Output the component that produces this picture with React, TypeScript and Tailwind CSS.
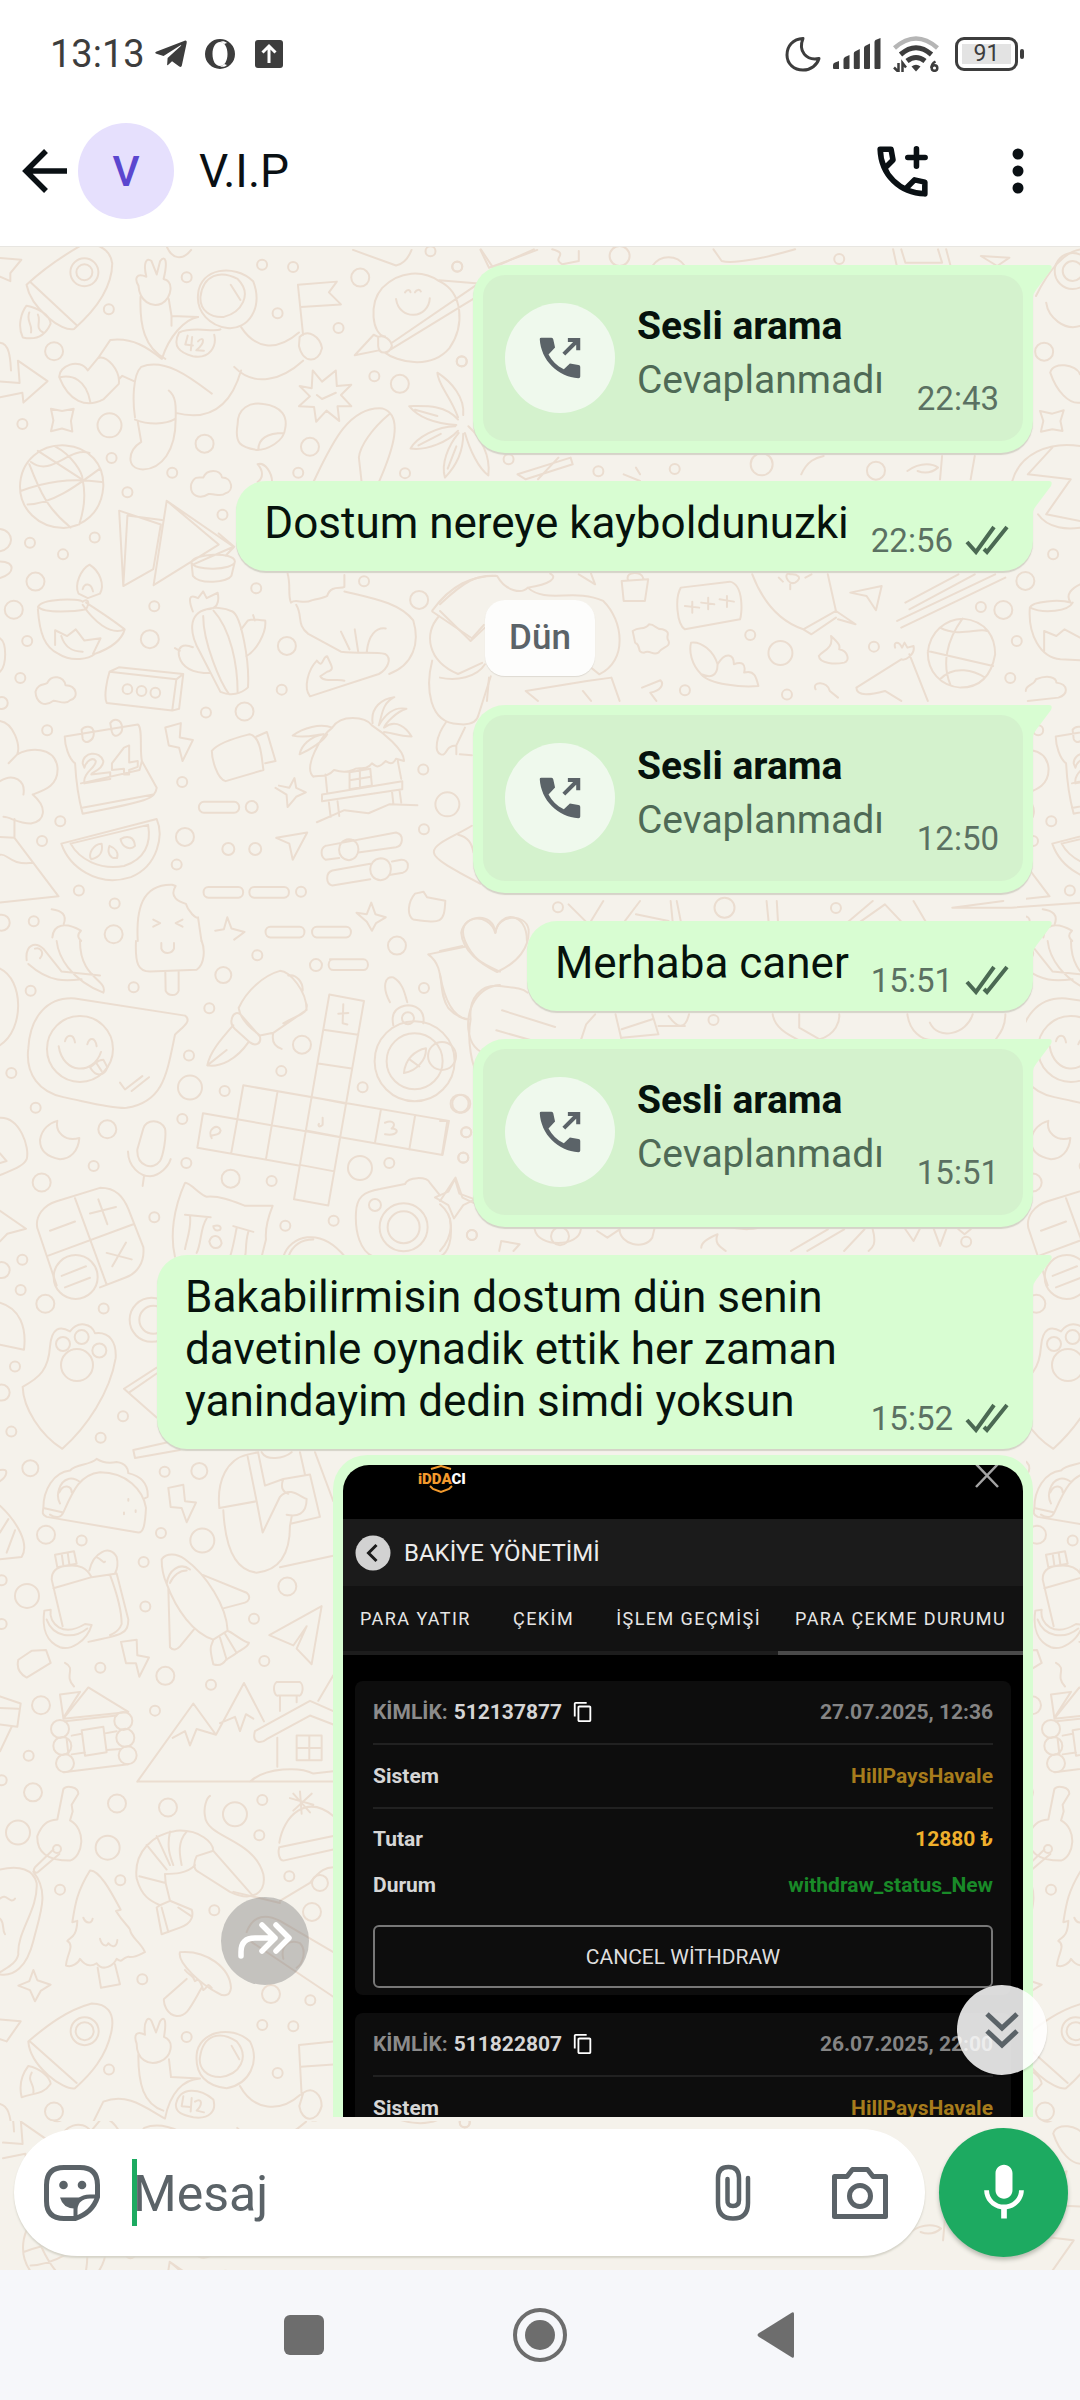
import React from "react";
import { FaTelegramPlane } from "react-icons/fa";
import { MdContentCopy, MdMic } from "react-icons/md";

type Zone = {
  matrix: [number, number, number, number];
  dots: number[][];
  paths: string[];
};

/* Doodles of the chat wallpaper, grouped by region. matrix = x, y, scaleX, scaleY; dots = cx, cy, radius. */
const zones: Zone[] = [
  {
    matrix: [0, 240, 0.3444, 0.4464],
    dots: [
      [316, 153, 5], [157, 247, 9], [65, 410, 5], [318, 413, 12], [324, 486, 5], [370, 563, 5], [275, 664, 5], [87, 676, 5],
      [183, 702, 5], [103, 763, 9], [40, 826, 9], [448, 818, 5], [435, 892, 9], [79, 896, 5], [59, 979, 5], [137, 1096, 5],
      [500, 519, 5], [594, 454, 9], [646, 613, 5], [744, 778, 5], [542, 81, 5], [761, 53, 5], [851, 58, 5], [806, 162, 5],
      [1046, 82, 9], [983, 195, 5], [1087, 303, 5], [1161, 320, 9], [900, 461, 9], [866, 519, 5], [1176, 520, 5], [1341, 270, 5],
      [1328, 57, 5], [1250, 23, 5], [1057, 762, 5], [1217, 804, 9], [833, 907, 9], [818, 1005, 5], [598, 1056, 5], [710, 1054, 9],
      [529, 1212, 5], [731, 1268, 6], [537, 1335, 9], [663, 1362, 6], [741, 1362, 6], [175, 1300, 5], [122, 1344, 5], [229, 1455, 5],
      [333, 1484, 5], [98, 1524, 5], [513, 1397, 5], [874, 1458, 5], [1229, 1184, 5], [1299, 1262, 12], [1231, 1318, 5], [330, 1553, 9],
      [5, 1527, 8], [5, 1035, 6], [245, 70, 14], [245, 70, 8],
    ],
    paths: [
      "M77 98C130 60 190 30 235 10C270 0 320 15 326 50C325 110 270 160 215 197C180 205 90 150 77 98ZM88 92L222 188M77 145C110 150 145 165 147 185C130 215 100 222 66 216C50 190 62 160 77 145M85 160C75 180 95 185 90 205M110 165C120 180 100 195 125 205",
      "M0 38L62 42L30 72V90L0 80M0 315L57 318L52 268L138 314L68 362L65 340L0 350M0 228C30 230 30 270 32 290",
      "M402 100C390 85 395 70 425 80C415 50 425 35 440 45L455 75L465 45C480 30 488 45 475 85C505 90 500 125 470 140C440 150 405 135 402 100ZM408 125C405 190 420 240 480 264M490 130L498 168L575 170M498 168V190M575 120C580 60 680 50 735 90C765 150 720 200 660 195C610 190 570 160 575 120ZM582 125C590 75 640 65 690 85C735 120 700 160 650 170C610 172 580 155 582 125ZM670 98L698 132",
      "M575 170C535 175 490 215 470 264C430 240 385 215 320 222L285 262M640 198C620 205 560 190 520 205C500 235 520 250 560 258C610 265 630 235 622 210M700 193C740 240 800 250 868 205M870 215C895 195 930 215 935 240C925 275 880 275 868 235ZM880 268C820 310 740 330 680 282M700 290C670 370 610 405 510 385M615 342C560 310 480 260 410 282C385 300 385 360 392 395M392 315L355 302L345 310M285 262L255 290C230 260 170 280 172 305C200 360 250 375 300 355L345 320C350 290 310 255 285 262ZM175 305C210 300 250 310 262 360M490 335C515 350 510 380 510 400M392 400C430 412 480 412 510 398M400 405L410 450C370 470 365 510 415 512C470 510 510 470 510 400",
      "M545 212L538 232L560 234M558 215L554 245M575 225C590 212 600 225 570 245L592 246",
      "M865 98L978 91L955 115L990 142L873 148M865 98L880 210M1118 214C1080 210 1070 140 1110 105C1160 65 1230 65 1275 90C1345 115 1350 190 1305 240C1250 290 1150 270 1118 250M1098 215L1085 210L1030 256L1100 245M1098 215C1115 210 1135 220 1138 235C1130 255 1100 255 1098 235ZM1138 228L1390 95L1275 88M1130 245L1405 115M1150 130C1160 180 1245 175 1248 128M1176 115C1182 108 1190 108 1192 115M1205 115C1210 108 1218 108 1222 113",
      "M870 325L905 330L908 290L935 315L975 290L978 325L1020 322L990 345L1020 370L980 370L985 403L948 380L918 405L912 372L868 370L900 348ZM920 345L935 354L975 340M148 376L180 381L214 376L206 403L210 427L180 420L148 426L155 402Z",
      "M690 410C690 375 725 360 765 365C820 370 835 395 828 420C825 450 775 468 745 468C700 462 680 455 690 410ZM750 468C750 440 780 430 825 430M910 540C960 460 1010 370 1110 375C1175 390 1140 470 1100 540M1130 388C1080 420 1045 460 1042 485L1050 540",
      "M1330 395C1310 350 1270 320 1270 295C1310 315 1350 350 1345 390M1330 400C1290 365 1230 370 1188 370C1220 400 1280 410 1325 412M1322 415C1270 415 1210 440 1192 465C1240 470 1300 450 1330 425M1332 430C1300 460 1280 500 1292 530C1330 500 1345 470 1345 432M1350 430C1365 470 1390 510 1418 525C1425 480 1395 440 1360 415M1205 378L1270 392M1215 458L1280 432M1300 510L1325 460",
      "M58 550C60 490 120 455 190 458C260 462 302 500 300 550C295 610 240 640 185 643C110 642 58 600 58 550ZM85 500C120 570 140 600 205 642M110 470L240 535C250 570 245 600 230 635M60 560C130 540 200 530 295 540M80 590C150 590 220 550 290 510M90 495C150 530 200 460 260 475M160 460C210 480 240 520 240 535",
      "M555 545C565 525 580 530 590 530C600 510 640 510 645 530C675 530 680 560 655 565C640 575 625 565 605 567C580 580 550 570 555 545ZM103 1010C110 990 130 995 137 990C150 970 185 975 190 995C225 995 228 1025 205 1028C190 1040 170 1030 155 1030C130 1045 105 1035 103 1010Z",
      "M346 604L467 635L445 735L358 773ZM358 773L370 615L470 625M484 582L635 680L446 771ZM484 582L678 685L560 725M635 655L680 685L655 705M556 720C560 700 680 695 682 718C680 738 560 740 556 720ZM556 720L560 750C580 770 660 765 672 750L682 718",
      "M110 820C120 800 230 800 240 808C255 800 262 808 250 825C220 830 130 835 110 820ZM250 810C290 830 330 850 362 870C320 885 270 850 240 815M110 825C115 880 130 910 170 925C210 945 260 935 275 925C330 910 355 890 362 870M228 790C215 770 235 735 260 725C290 740 305 770 290 790L255 800ZM240 780C245 765 265 765 270 785M160 905V872L195 885L220 870L245 895L292 890L270 925M178 885C190 915 215 920 240 920",
      "M748 500C770 495 790 520 790 540M748 540C765 530 765 515 748 500M318 965L345 955L532 970L520 1048L500 1052L310 1035C300 1020 312 980 318 965ZM318 965L512 982L500 1052M512 982L532 970",
      "M560 830C545 800 550 790 575 800L590 785L600 800L632 788C638 810 630 825 600 825M600 825C545 835 550 880 580 920L640 1010C670 1020 700 1015 720 1000C725 940 700 840 675 830C650 820 620 820 600 825ZM590 840C590 900 640 990 665 1015M620 828C670 870 690 950 690 1012M700 870L720 850C740 845 745 850 770 850C775 880 740 920 715 930M560 910C530 900 515 910 520 930C530 960 570 968 610 968M508 912L522 918M735 838L740 850",
      "M835 745C845 770 835 795 845 810C860 800 880 815 905 805C930 800 940 800 950 795C960 770 990 780 1000 775V748M860 815C880 840 860 860 895 880L990 920C1040 925 1090 920 1118 925C1140 935 1125 960 1100 970L900 1020C880 1000 895 960 920 940M920 940C940 960 935 930 950 930C960 950 975 960 950 965L930 975C940 990 980 980 1000 985M1000 785C1080 800 1160 810 1200 850C1220 900 1200 950 1130 970M990 875L1015 915M1030 870L1040 920M1065 920C1070 885 1090 865 1120 868",
      "M370 1004m-14 0a14 11 0 1 0 28 0a14 11 0 1 0 -28 0M411 1008m-14 0a14 11 0 1 0 28 0a14 11 0 1 0 -28 0M451 1012m-14 0a14 11 0 1 0 28 0a14 11 0 1 0 -28 0",
      "M188 1110L400 1083C415 1090 405 1140 412 1165L455 1225C450 1250 430 1255 240 1283C225 1240 220 1200 218 1170C200 1160 188 1130 188 1110ZM235 1270L445 1240M237 1095C245 1085 270 1085 272 1100C275 1120 245 1130 240 1115ZM320 1080C330 1068 352 1070 355 1090C355 1108 330 1115 325 1100ZM412 1165L405 1185L235 1215M240 1170C240 1145 290 1140 300 1165C300 1185 265 1190 265 1195L320 1190V1205L245 1215C240 1190 280 1180 278 1165C270 1155 250 1165 245 1180ZM360 1135L375 1130V1168L400 1165V1178L375 1185V1195H360V1182L325 1185V1170Z",
      "M480 1090L525 1080L522 1112L560 1118L530 1165L520 1135L490 1130ZM615 1142C640 1120 700 1110 725 1105C760 1110 760 1165 765 1185L655 1210C630 1205 615 1160 615 1142ZM745 1110L775 1100L800 1165L770 1170",
      "M810 1220L840 1225L855 1203L860 1225L888 1235L860 1245L835 1268L832 1240L800 1225M592 1256H680A14 12 0 0 1 680 1281H592A14 12 0 0 1 592 1256M605 1447H692A14 12 0 0 1 692 1471H605A14 12 0 0 1 605 1447M738 1447H825A14 12 0 0 1 825 1471H738A14 12 0 0 1 738 1447M785 1536H870A14 12 0 0 1 870 1560H785A14 12 0 0 1 785 1536M920 1536H1005A14 12 0 0 1 1005 1560H920A14 12 0 0 1 920 1536M802 1337L892 1325L850 1386L840 1350Z",
      "M910 1200C880 1180 930 1110 965 1090C990 1060 1060 1065 1080 1085C1110 1100 1175 1140 1173 1165L1150 1160C1140 1175 1130 1170 1120 1165C1100 1180 1095 1180 1080 1170C1060 1190 1040 1175 1025 1185C1010 1190 990 1190 970 1185C950 1205 920 1195 910 1200ZM965 1090C930 1080 880 1090 850 1108C890 1115 920 1105 940 1105C900 1110 875 1130 870 1150C900 1140 940 1120 950 1105M1082 1080C1075 1045 1110 1025 1145 1022C1110 1035 1110 1060 1100 1085C1130 1045 1160 1045 1180 1048C1150 1055 1120 1080 1115 1090C1150 1070 1180 1090 1195 1110C1160 1110 1130 1100 1115 1100M935 1240L1168 1210V1228L935 1255ZM945 1195L950 1235M1155 1165L1165 1205M1015 1190V1228L1080 1220L1075 1182ZM1045 1185V1225M1015 1208L1078 1200M955 1258L960 1290M980 1255L985 1288M1138 1232L1142 1260M1160 1230L1165 1258M920 1302L1000 1275L1070 1282L1130 1262L1212 1264",
      "M178 1350L455 1295C475 1330 460 1400 380 1425C280 1450 200 1400 178 1350ZM205 1350L430 1308C440 1350 420 1385 360 1400C290 1410 230 1385 205 1350M295 1350C270 1350 255 1375 265 1385C290 1380 300 1370 295 1350ZM318 1355C310 1370 320 1385 340 1382C345 1370 335 1360 318 1355ZM350 1340C355 1360 380 1365 392 1355C390 1335 370 1330 350 1340Z",
      "M0 1075C40 1080 60 1130 50 1150C80 1135 160 1130 167 1180C170 1220 130 1230 95 1240C140 1270 130 1300 90 1305C50 1305 30 1290 10 1290M25 1170L50 1150M0 1210C40 1190 75 1210 68 1240M42 1295V1337L0 1335M42 1337L170 1468L0 1482M0 1375C20 1370 30 1400 95 1393M0 645C45 650 40 690 0 695M0 718C45 718 45 745 0 755M0 890C20 900 20 950 0 965",
      "M400 1568C395 1500 410 1440 500 1442L510 1445C490 1470 520 1480 540 1485C545 1500 570 1520 575 1515L585 1568M445 1520L465 1528L445 1536M530 1520L510 1528L530 1536M150 1497C180 1500 195 1510 185 1530M152 1560C155 1530 190 1525 235 1545C215 1560 240 1568 235 1568",
      "M945 1355L1150 1325C1175 1330 1170 1355 1150 1358L1040 1370M985 1382L945 1386C930 1380 930 1360 945 1355M1013 1340C1050 1340 1050 1385 1013 1387C975 1385 975 1342 1013 1340ZM965 1410L1075 1395M1138 1390L1165 1386C1190 1385 1190 1410 1170 1415L1130 1420M1075 1430L965 1444C945 1440 945 1415 965 1410M1105 1383C1145 1383 1145 1430 1105 1432C1065 1430 1065 1385 1105 1383Z",
      "M1255 828C1310 770 1370 750 1440 750M1255 830L1370 890L1405 860M1275 840C1230 880 1240 940 1330 970L1400 945M1255 940C1235 1000 1245 1080 1330 1082C1360 1085 1385 1080 1390 1060L1425 975M1295 1078C1265 1110 1260 1145 1280 1150C1300 1155 1290 1130 1325 1130L1350 1090M1335 1150L1370 1152M1325 1130V1150",
      "M1370 1310C1330 1330 1255 1350 1260 1370C1260 1385 1320 1410 1395 1440M1330 1330C1360 1335 1370 1350 1375 1370M1205 1462L1230 1458L1240 1470L1293 1478C1290 1530 1280 1528 1200 1520C1180 1510 1185 1480 1205 1462ZM1035 1505L1065 1508L1078 1482L1090 1508L1120 1515L1092 1528L1080 1545L1065 1525ZM625 1545L650 1542L660 1515L672 1540L710 1548L680 1565M1350 1568C1320 1510 1420 1500 1438 1550C1450 1500 1530 1500 1530 1568",
      "M485 14C500 40 530 45 555 20M1025 20L1150 55C1180 50 1190 30 1195 20M1395 20L1420 60L1560 20",
    ],
  },
  {
    matrix: [440, 240, 0.4082, 0.3333],
    dots: [
      [42, 77, 5], [978, 54, 5], [53, 361, 5], [388, 691, 5], [575, 684, 5], [1068, 689, 9], [1480, 332, 9], [1550, 90, 18], [1550, 90, 10],
      [1502, 940, 5], [1434, 1020, 9], [1380, 1107, 9], [1325, 1098, 5], [1413, 1200, 5], [760, 1182, 5], [834, 1236, 12], [1063, 1217, 5],
      [1397, 1311, 5], [600, 1348, 5], [850, 1361, 5], [440, 45, 10], [788, 670, 11], [168, 655, 5],
    ],
    paths: [
      "M100 25L130 80L230 25M275 25C320 40 270 50 300 70L340 60V30M520 75C540 40 580 40 600 75M670 25L690 60C720 70 800 50 870 25M1110 25L1120 80M1130 25L1140 65H1230L1220 25M1240 25L1252 80M1325 45L1395 50L1365 75ZM1570 25C1530 30 1490 90 1460 165M1485 185C1490 230 1530 270 1568 255M1495 395C1500 360 1560 370 1568 400M1495 395C1510 450 1540 490 1568 485M1470 510L1500 518L1528 508L1520 540L1525 570L1500 565L1472 572L1478 540ZM190 700L320 650L325 670L210 715ZM290 650L240 715M450 700L490 720M480 680L490 700M885 700C900 660 920 650 940 645M1145 690C1180 660 1210 670 1220 680C1200 700 1180 695 1170 690M1230 645L1225 715M1310 645L1300 715M1402 720C1420 640 1490 600 1568 615M1440 700L1500 620M1440 700L1545 715M1485 820L1545 715M1465 820C1490 865 1540 865 1568 860M1485 820L1568 840",
      "M370 998L380 1030L340 1000M445 1020L510 1015L502 1080L450 1080ZM460 1015C455 990 495 990 498 1012M590 1040L710 1022C745 1030 740 1120 735 1135L600 1165C580 1150 575 1070 590 1040ZM600 1095L635 1100M618 1082V1115M640 1085L672 1090M657 1070V1105M685 1075L720 1082M703 1065V1098M765 1000C790 1080 830 1140 890 1165L970 1110L950 1000M890 1165L910 1180L970 1130M970 1110L1018 1150L975 1135M830 1010L840 1022M858 1030V1045M895 1010L910 1000M858 1000C840 990 850 1035 870 1025C890 1010 875 998 858 1000M1005 1055L1082 1035L1068 1108L1045 1065ZM1140 1085L1270 1000M1150 1105L1310 1000M1120 1140L1360 1000M1130 1160L1385 1010",
      "M472 1170C490 1155 500 1170 512 1150C530 1150 525 1165 545 1165C570 1175 550 1185 560 1200C565 1220 545 1215 535 1235C520 1245 515 1225 500 1235C480 1235 495 1215 478 1205ZM615 1205C640 1200 670 1230 680 1270C680 1310 660 1310 640 1300C615 1270 610 1230 615 1205ZM680 1270C700 1230 720 1240 720 1270C740 1260 750 1270 745 1295C770 1285 775 1310 780 1335M640 1300C660 1330 740 1340 780 1335M958 1185C980 1210 980 1215 978 1225C1000 1230 1005 1260 990 1265C970 1270 930 1270 928 1245C935 1230 965 1225 958 1185Z",
      "M1195 1235C1200 1170 1240 1135 1280 1133C1340 1140 1360 1190 1360 1240C1350 1310 1320 1340 1275 1340C1225 1335 1195 1290 1195 1235ZM1280 1133C1240 1200 1230 1270 1250 1330M1195 1230L1355 1275M1225 1160C1270 1190 1320 1160 1340 1170M1225 1315C1260 1270 1310 1290 1335 1310M1445 1100C1450 1080 1520 1075 1545 1085C1530 1060 1550 1040 1568 1030M1445 1100C1440 1180 1470 1250 1520 1255L1568 1258M1445 1100C1480 1120 1540 1110 1550 1085M1480 1230V1170L1510 1185L1530 1165L1568 1190M1115 1220C1110 1200 1125 1200 1132 1220L1138 1205L1145 1220L1160 1215C1165 1240 1140 1260 1130 1255M1130 1255L1020 1340C1020 1370 1060 1360 1090 1350L1130 1380M1150 1240L1195 1380M1435 1350C1435 1330 1455 1335 1460 1315C1490 1300 1510 1310 1510 1325C1540 1330 1540 1360 1515 1370L1440 1380",
      "M0 1090C60 1020 90 1000 140 1005M140 1005C160 1050 200 1060 215 1040C270 1030 290 1010 270 998M215 1040C260 1090 330 1040 400 1080C450 1140 460 1260 390 1300L370 1280M0 1110L75 1200L110 1160M0 1310C40 1320 90 1310 110 1270M120 1310L115 1380M210 1350L360 1320L420 1310L440 1380M210 1350L240 1380M350 1350L370 1380M495 1340L540 1318C550 1330 540 1350 515 1355L530 1380M920 1345C910 1320 950 1320 955 1350L975 1370",
    ],
  },
  {
    matrix: [0, 940, 0.3333, 0.3827],
    dots: [
      [92, 130, 5], [401, 121, 5], [670, 89, 8], [628, 176, 5], [772, 37, 5], [948, 63, 6], [1191, 12, 9], [1272, 123, 5],
      [567, 299, 5], [906, 271, 9], [34, 345, 5], [107, 436, 5], [570, 383, 12], [674, 392, 5], [844, 340, 5], [1088, 382, 5],
      [1384, 425, 9], [322, 492, 9], [281, 588, 5], [125, 631, 9], [547, 465, 5], [559, 580, 5], [692, 621, 9], [815, 627, 5],
      [1080, 593, 12], [1168, 580, 5], [1399, 500, 5], [1390, 566, 5], [463, 722, 5], [856, 744, 5], [1001, 731, 5], [1416, 768, 5],
      [67, 833, 5], [62, 912, 5], [136, 948, 9], [311, 960, 5], [45, 1112, 5], [34, 1282, 5], [369, 1242, 5], [302, 1298, 5],
      [5, 860, 8], [5, 1180, 8], [1125, 690, 6], [240, 282, 33], [189, 1053, 7], [245, 1035, 7], [298, 1070, 7], [231, 1108, 16],
      [1211, 748, 24], [1211, 748, 16], [1244, 314, 40], [1244, 314, 28], [227, 878, 22], [1224, 202, 6], [455, 990, 22], [460, 990, 14],
    ],
    paths: [
      "M408 0C405 60 415 80 450 80L590 75C615 60 615 20 605 0M484 5V20C490 35 515 35 522 20V5M496 82L497 130C505 145 530 145 536 130V80M80 50C75 10 105 0 130 20L185 80L300 90M85 60C150 110 200 105 245 100M170 0C175 40 210 100 310 135C325 100 240 100 240 0M0 72C70 100 75 230 0 272M105 20C120 15 135 30 120 45",
      "M85 280C90 200 140 145 225 150L555 195C580 210 540 230 525 245C500 350 490 420 380 436C330 438 260 420 190 408C120 395 75 350 85 280ZM176 275C190 350 280 350 303 290M195 262C200 245 220 240 225 265M262 270C268 252 285 250 290 275M270 330C290 320 290 310 310 310L322 330C315 350 290 360 270 330ZM290 320L305 340M360 370L375 388L427 353M395 392L447 356",
      "M716 175C740 130 790 90 840 78C870 80 920 130 920 180L820 240L780 247L770 240C740 220 720 200 716 175ZM865 90C890 85 910 110 908 130M920 165C925 190 900 190 850 215M820 240C815 260 820 275 845 282M695 205C700 185 715 185 725 195L780 250C785 270 765 275 750 265L705 230C695 222 692 215 695 205ZM700 220C660 260 630 290 622 325C660 330 710 310 745 265M622 325L680 285",
      "M988 140L1092 157L985 691L882 675ZM970 232L1075 245M955 320L1055 333M937 408L1040 425M918 495L1020 512M900 585L1003 602M730 377L1347 470L1328 559L712 466ZM609 450L712 466M609 450L592 540L900 587M712 466L694 553M832 397L798 570M1143 440L1125 527M1245 458L1228 545M1015 190L1045 188M1030 165L1028 215L1042 218M968 462V480C955 490 955 480 957 478M635 515C620 490 655 475 662 495C660 510 640 505 632 510M1155 475C1180 465 1190 480 1175 490C1200 490 1195 510 1155 505",
      "M1170 160C1145 120 1155 90 1180 95C1210 110 1215 140 1222 160M1180 220C1170 180 1200 170 1225 168C1260 170 1275 190 1270 215M1212 345C1215 310 1245 285 1278 280C1280 310 1250 340 1212 345ZM1230 310L1258 328",
      "M120 520C125 490 150 475 172 470C165 500 195 525 238 515C235 550 210 570 180 570C145 565 120 550 120 520ZM412 545L430 490C440 465 480 465 495 490C500 510 490 560 480 575C460 600 410 590 412 545ZM384 550C385 590 420 615 450 615C480 612 505 590 512 570M432 615L428 640M0 462C60 460 90 540 80 570C70 590 30 600 0 612M0 555L20 575L0 580M0 705L78 752L22 765L0 785",
      "M112 750C105 720 130 690 170 680L300 645C350 645 370 670 385 700L430 800C435 840 410 870 375 880L300 905M112 750L170 900M225 672L320 898M145 822L400 740M150 757L225 733M270 712L348 695M295 675L322 740M320 815L395 832M378 788L337 850M185 875L258 850M195 905L270 880",
      "M525 825C510 770 520 700 555 632C570 630 600 665 620 668C660 665 700 680 735 692L818 692C805 720 795 750 798 780L785 825M555 715L632 722M700 745L760 760M570 718C575 750 560 780 555 805M620 725C600 750 605 790 590 815M710 750C705 770 700 800 690 825M745 760C735 790 740 810 735 825M640 745C660 740 665 748 660 755C645 760 640 750 640 745ZM628 785C635 765 660 765 665 790C660 805 635 810 628 785M850 825C870 770 960 745 1035 825M865 825C880 790 910 780 940 780",
      "M1068 710C1070 670 1090 655 1140 648L1215 635C1225 615 1280 615 1290 632M1068 710C1065 760 1080 810 1120 825M1290 632L1320 665M1350 725C1360 780 1345 815 1320 825M1305 670L1345 655L1365 622L1378 660L1425 675L1390 690L1362 725L1345 690ZM1285 35L1395 15M1285 35C1340 70 1310 130 1345 175C1370 200 1400 205 1405 205M1395 0C1420 50 1450 60 1500 80M1500 115C1430 120 1400 180 1405 230C1410 270 1430 290 1470 300M0 945C60 960 80 1010 72 1068L0 1055",
      "M68 1165C120 1140 145 1120 150 1060C155 1010 180 1005 210 1020C235 990 275 1000 285 1025C330 1020 350 1050 347 1090C330 1180 260 1270 187 1327C120 1290 70 1220 68 1165ZM372 1170L470 1115M372 1170L470 1245M390 1178L470 1130M990 48H1090A14 14 0 0 1 1090 76H1000A14 14 0 0 1 1000 48",
    ],
  },
  {
    matrix: [0, 1440, 0.3333, 0.4464],
    dots: [
      [91, 61, 8], [494, 69, 5], [598, 67, 8], [138, 210, 9], [245, 223, 5], [483, 206, 5], [607, 223, 12], [431, 271, 5],
      [81, 347, 12], [436, 371, 5], [862, 326, 9], [762, 398, 5], [793, 493, 5], [301, 508, 5], [496, 526, 9], [633, 546, 5],
      [465, 604, 5], [123, 592, 9], [86, 705, 5], [99, 787, 9], [54, 877, 12], [351, 812, 9], [504, 821, 9], [323, 911, 12],
      [705, 836, 12], [787, 804, 5], [778, 883, 5], [868, 975, 5], [936, 1055, 9], [180, 1005, 5], [361, 984, 5], [643, 1051, 5],
      [427, 1206, 5], [813, 1239, 9], [931, 1253, 5], [787, 1308, 5], [880, 1311, 5], [560, 1335, 5], [327, 1408, 5], [833, 1416, 5],
      [162, 1502, 9], [960, 990, 8], [254, 1322, 14], [254, 1322, 9], [5, 312, 5], [5, 410, 5], [5, 760, 5], [171, 914, 4],
      [180, 645, 9], [187, 683, 9], [195, 722, 9], [370, 627, 9], [376, 665, 9], [383, 704, 9],
    ],
    paths: [
      "M130 150C130 110 160 70 210 66C230 50 270 55 290 40C310 50 330 50 350 47C380 50 385 65 385 72C430 80 445 100 443 125L430 130M190 160C220 110 240 75 300 70C380 70 430 110 438 150C435 190 430 205 415 205L140 170C125 165 128 160 130 150ZM180 140C165 120 180 90 205 85C220 80 240 92 240 92M190 160C185 170 170 175 150 165M178 115C190 95 215 100 215 115M385 130v4M372 160v4M407 155v4",
      "M505 105L550 98L555 135L588 138L560 182L545 150L512 148ZM363 450L410 445L412 480L447 485L418 528L408 498L378 498ZM400 20L520 0M400 20L405 38L540 20M0 65C30 60 20 80 0 90M0 145C50 180 90 230 65 260L0 265M0 205L25 175M20 250L45 200",
      "M658 150C650 90 680 40 745 30L775 25M658 150L770 135L743 35M670 155C675 230 700 290 770 295C840 290 870 250 870 190L875 170M770 135L788 205L840 125C870 100 900 125 920 130C920 165 890 170 860 165M775 28L795 100L850 85M850 85L930 75L960 170L875 185M850 85C840 105 850 115 865 118M840 283L1000 257M785 25C800 45 850 40 875 25M900 25L915 75M945 25L1000 135",
      "M165 255L222 247L230 275L172 283ZM185 252L190 278M203 250L208 276M155 310C155 290 175 282 195 280C240 275 260 285 275 305L350 297L385 400C385 430 370 435 265 450M155 310L188 415M160 330L275 305M330 300C350 340 365 380 365 410C355 430 340 430 330 435M268 290C280 250 330 230 350 260C355 275 350 290 345 297M290 260C305 265 310 275 315 270M133 380L152 378C145 410 190 440 255 410L275 412C260 450 210 470 180 462C140 450 125 420 133 380ZM140 400C160 440 220 445 262 420",
      "M485 265C500 250 530 252 555 265C620 300 680 370 683 425L640 445C580 430 530 380 500 320C488 300 485 285 485 265ZM500 320C505 290 540 270 570 288M510 318C520 300 540 290 560 290M608 300L740 340C755 350 745 360 735 362L670 375M505 330L510 462C520 470 530 468 540 460L582 422M640 445C635 460 625 455 640 500C660 505 670 500 678 490C700 480 710 475 715 472C730 465 745 460 747 452C730 450 700 430 683 425M660 440L680 490M675 432L710 475",
      "M808 435L965 370L935 500L890 465L920 415L880 458ZM55 490L85 475L95 470L138 468L152 497L80 530C55 520 50 505 55 490ZM195 497C230 510 190 525 222 550M0 572L62 588L52 640L0 635M0 598L55 600M35 640L0 695",
      "M180 568L240 562L190 620ZM190 622L265 552L385 607ZM195 628L350 615M245 648L310 640L320 697L255 705ZM215 660L245 656M215 702L255 698M315 655L350 650M320 692L362 690M190 742L385 724M200 668L205 700",
      "M412 763L580 588L648 658L732 542L792 628M518 665L555 650L570 682L590 645L648 658M660 632L705 618L720 650L738 612L760 622M412 763H1000M765 650L930 582L1000 605M765 650C755 675 780 680 800 668L930 615L1000 635M840 605V570M890 585V570M830 540H900A8 12 0 0 1 895 570H835A8 12 0 0 1 830 540M832 665V730M890 660H965V715H890ZM928 660V715M890 688H965M750 763C800 730 900 730 940 745L1000 740M955 582L1000 525",
      "M190 780C200 770 235 775 235 790L215 815L218 830L210 850C260 870 250 930 210 940C140 940 110 920 112 885C125 860 140 850 172 848ZM160 915L105 955C95 965 110 970 115 965L178 925M0 960C60 950 100 960 110 990C115 1050 50 1100 55 1150C50 1170 20 1180 0 1190M100 965C150 1010 120 1060 100 1120C80 1180 40 1200 0 1195M0 1025C20 1010 30 1040 45 1025M0 1070C15 1080 5 1095 15 1105",
      "M270 962C230 1010 225 1040 217 1078L232 1075C230 1110 215 1110 202 1120C225 1130 200 1150 198 1175C215 1180 235 1170 240 1160C260 1180 280 1175 290 1170C310 1190 340 1175 350 1160C370 1170 360 1160 385 1155C400 1160 420 1150 435 1145C420 1120 395 1115 390 1095C390 1090 370 1080 348 1053L362 1050C340 1020 300 960 270 962ZM293 1180L303 1225L360 1217L345 1172M250 1068C258 1082 275 1082 278 1070M300 1115C305 1130 320 1135 325 1125C335 1135 350 1135 352 1118M55 1220L88 1210L100 1185L112 1208L152 1218L122 1232L105 1255L90 1230Z",
      "M410 980C400 920 460 880 530 873C600 870 640 900 640 918L760 1020M640 918L590 930C580 945 580 960 595 965L690 1010C760 1035 800 1010 790 970C760 890 620 890 615 840C610 820 620 800 630 795M410 980C425 1020 450 1030 480 1040L510 1030L497 990L495 970C520 970 560 970 585 950M440 905L500 960M470 885L510 950M510 875C500 910 510 930 520 950M560 875C530 900 540 930 545 950M418 975L497 990M480 1040L470 1045L485 1105L540 1090C580 1080 580 1060 575 1050L510 1030M485 1045L505 1100M535 1045L575 1065",
      "M540 1145C620 1140 690 1180 693 1225C690 1245 670 1245 650 1235C610 1220 530 1170 540 1145ZM555 1185C570 1200 580 1195 585 1210C600 1200 605 1220 610 1230C625 1225 620 1210 635 1225M605 1225C570 1270 560 1290 530 1288C500 1285 490 1260 492 1250L560 1205M838 900C850 840 920 790 1000 840M838 910L1000 885M838 910C832 925 840 940 850 940L1000 915M870 800L940 815M900 785L905 835M880 828L935 790M880 790L930 832M840 1030L930 990C960 960 980 955 1000 955M700 1010L840 1035M740 1100C760 1060 800 1060 840 1075L1000 1145M740 1115L1000 1245M850 1160C840 1130 870 1115 900 1125C920 1140 910 1170 890 1180",
      "M85 1345C140 1310 200 1275 275 1260C320 1260 345 1280 335 1320C320 1380 270 1420 225 1450C190 1455 90 1400 85 1345ZM90 1345L230 1438M85 1400C120 1405 150 1425 152 1440C130 1465 100 1460 65 1470C55 1440 70 1415 85 1400M95 1415C80 1435 105 1440 100 1460",
      "M410 1350C400 1330 410 1320 435 1330C430 1300 445 1285 455 1300L468 1325L480 1300C495 1285 500 1300 492 1335C525 1345 515 1380 480 1390C445 1400 410 1385 410 1350ZM415 1375C415 1440 430 1485 490 1500M507 1385L513 1425L600 1428M590 1375C595 1325 690 1305 750 1345C780 1390 750 1440 680 1450C620 1445 585 1420 590 1375ZM600 1380C610 1330 660 1320 710 1345C750 1380 720 1420 660 1425C620 1425 595 1405 600 1380ZM695 1355L718 1385M600 1428C550 1430 510 1460 495 1518C430 1490 380 1460 310 1480L270 1540M528 1485C540 1445 600 1450 640 1475C650 1500 630 1520 580 1515C550 1510 525 1505 528 1485ZM720 1445C760 1500 840 1505 900 1465M897 1353L1000 1345M897 1353L905 1465M910 1460C940 1445 965 1465 965 1490C950 1530 905 1525 898 1490ZM903 1402L1000 1397M0 1296L62 1300L20 1345M0 1340L20 1345M0 1485C25 1490 30 1510 35 1540M55 1540L58 1525L120 1540M550 1468L545 1490L570 1492M575 1472L572 1502M585 1480C605 1470 610 1485 590 1500L612 1504",
    ],
  },
  {
    matrix: [440, 900, 0.4082, 0.3333],
    dots: [
      [289, 19, 5], [970, 21, 5], [48, 608, 9], [64, 694, 5], [57, 770, 5], [78, 1002, 5], [670, 357, 5], [294, 1006, 9], [1289, 1022, 5],
      [697, 20, 10], [5, 465, 14],
    ],
    paths: [
      "M136 95C130 30 60 40 52 95C55 150 100 190 140 213C190 185 220 140 217 85C210 35 140 40 136 95ZM0 150L55 135M0 220C10 290 30 350 70 355M75 355C70 290 100 250 145 255C180 260 200 260 215 275M75 355C65 420 80 500 90 510M152 328L282 378M138 388L230 420M345 418L358 370L380 340M430 340L445 418M445 385L520 355M520 340L535 400L445 410M560 345C580 380 600 390 610 340M535 375H600M815 340C820 380 850 400 880 418M880 340V380L930 415C970 400 980 360 978 340M1145 340C1150 390 1180 420 1210 418M1200 365C1220 420 1290 400 1305 340M1385 340C1385 380 1370 400 1360 418M315 10L360 65M400 0L370 60M450 65L490 0M480 40L560 60M565 0L570 62M580 0L590 62M800 0L805 62M825 0L828 62M1000 62L1060 0M1030 62L1090 10L1130 62M1160 0L1190 62M1255 20L1380 0M1255 20H1400L1568 5",
      "M0 660H18L5 760M0 900L38 830L55 890L90 910M0 910C40 950 30 1010 0 1050M232 985C240 1040 340 1040 345 985M385 990L410 1010L440 985M440 985C440 1030 500 1050 520 1010L525 985M150 1020L195 1030L180 1050M145 1050L150 1020M640 1040C640 1020 670 1005 680 1000C670 1030 690 1040 700 1050M700 975C740 990 780 985 790 975M860 1050L950 985M900 1050L990 985M990 1050L1040 985M1060 985C1070 1030 1060 1040 1050 1050M1140 985L1160 1020L1175 985M1210 985L1225 1035L1240 985M1270 985L1285 1000L1300 985",
    ],
  },
];

function DoodleZone({ zone }: { zone: Zone }) {
  const [ox, oy, sx, sy] = zone.matrix;
  return (
    <g>
      <g transform={`translate(${ox} ${oy}) scale(${sx} ${sy})`}>
        {zone.paths.map((d, j) => (
          <path key={j} d={d} />
        ))}
      </g>
      {zone.dots.map(([x, y, r], j) => (
        <circle key={j} cx={ox + x * sx} cy={oy + y * sy} r={r} />
      ))}
    </g>
  );
}

/* The doodle tile is 991 units wide and 1761 units tall; it repeats to the right and below. */
function Wallpaper() {
  return (
    <svg
      aria-hidden="true"
      viewBox="0 246 1080 2024"
      preserveAspectRatio="xMidYMin slice"
      className="absolute inset-0 size-full [&_path]:[vector-effect:non-scaling-stroke]"
      fill="none"
      stroke="#ebddd0"
      strokeWidth="2"
      strokeLinecap="round"
      strokeLinejoin="round"
    >
      <defs>
        <clipPath id="tile-main">
          <rect x="0" y="246" width="1080" height="1874" />
        </clipPath>
        <clipPath id="tile-right">
          <rect x="1026" y="720" width="54" height="1400" />
        </clipPath>
        <clipPath id="tile-below">
          <rect x="0" y="2120" width="1080" height="150" />
        </clipPath>
      </defs>
      <g clipPath="url(#tile-main)">
        {zones.map((z, i) => (
          <DoodleZone key={i} zone={z} />
        ))}
      </g>
      <g clipPath="url(#tile-right)">
        <g transform="translate(991 0)">
          <DoodleZone zone={zones[0]} />
          <DoodleZone zone={zones[2]} />
          <DoodleZone zone={zones[3]} />
        </g>
      </g>
      <g clipPath="url(#tile-below)">
        <g transform="translate(3 1761)">
          <DoodleZone zone={zones[0]} />
          <DoodleZone zone={zones[1]} />
        </g>
      </g>
    </svg>
  );
}

function StatusBar() {
  return (
    <div className="flex h-[108px] items-center justify-between pr-14 pl-[50px] text-[#3d3d3d]">
      <div className="flex items-center">
        <span className="text-[38px] leading-10">13:13</span>
        <FaTelegramPlane className="ml-2 size-9" />
        <svg viewBox="0 0 30 30" className="ml-4 size-[30px]" fill="currentColor">
          <path fillRule="evenodd" d="M15 0A15 15 0 1 1 15 30A15 15 0 1 1 15 0ZM15 3C10.500 3 7.500 8 7.500 15S10.500 27 15 27S22.500 22 22.500 15S19.500 3 15 3Z" />
          <path d="M15 3C17 1.500 20 2 22 4L19 5C18 4 16.500 3 15 3ZM15 27C17 28.500 20 28 22 26L19 25C18 26 16.500 27 15 27Z" fill="#fff" />
        </svg>
        <svg viewBox="0 0 28 28" className="ml-5 size-7">
          <rect width="28" height="28" rx="3" fill="currentColor" />
          <path d="M14 23V7M7.500 12.500L14 6L20.500 12.500" stroke="#fff" strokeWidth="3" fill="none" />
        </svg>
      </div>
      <div className="flex items-center">
        <svg viewBox="0 0 36 36" className="size-9" fill="none" stroke="currentColor" strokeWidth="3" strokeLinejoin="round">
          <path d="M18 2.500C8 3 2 10 2 19C2 28 9 34 18 34C26 34 32 29 34 22.500C21 25 13 15 18 2.500Z" />
        </svg>
        <svg viewBox="0 0 48 32" className="ml-3 h-8 w-12" fill="currentColor">
          <path d="M0 27Q0 25 2 24.500L6 23V31H1Q0 31 0 30ZM10.500 21.500Q10.500 20 12 19L16.500 17V30Q16.500 31 15.500 31H11.500Q10.500 31 10.500 30ZM20.800 15.500Q20.800 14 22 13.500L26.800 11V30Q26.800 31 25.800 31H21.800Q20.800 31 20.800 30ZM31 10Q31 9 32 8L37 5.500V30Q37 31 36 31H32Q31 31 31 30ZM41.500 4Q41.500 3 42.500 2L47.500 0V30Q47.500 31 46.500 31H42.500Q41.500 31 41.500 30Z" />
        </svg>
        <svg viewBox="0 0 46 36" className="ml-3 h-9 w-[46px]" fill="none" stroke="currentColor" strokeWidth="5">
          <path d="M1.500 12Q23-7 44.500 12" stroke="#b5b5b5" strokeWidth="4.500" />
          <path d="M7.500 18.500Q23 5 38.500 18.500" />
          <path d="M14 25Q23 18 32 25" />
          <path d="M18.500 30.500L23 35.500L27.500 30.500Q23 27 18.500 30.500Z" fill="currentColor" stroke="none" />
          <path d="M5.500 27V36L1 31.500M9.500 36V27L13 31.500" strokeWidth="2.500" />
          <path d="M42.500 25.500Q38.500 27.500 38.500 32" strokeWidth="2.500" />
          <circle cx="41.500" cy="32" r="2.800" strokeWidth="2.500" />
        </svg>
        <div className="ml-4 flex items-center gap-[2px]">
          <div className="rounded-[9px] border-[3px] border-[#3d3d3d] p-1">
            <div className="flex h-5 w-[49px] items-center justify-center bg-[#e3e3e3] text-[23px] leading-5">91</div>
          </div>
          <div className="h-[10px] w-1 rounded-sm bg-[#3d3d3d]" />
        </div>
      </div>
    </div>
  );
}

function Header() {
  return (
    <header className="flex h-[138px] items-center pb-3 text-[#0a1014]">
      <button aria-label="Geri" className="ml-[21px]">
        <svg viewBox="0 0 48 48" className="size-12" fill="none" stroke="currentColor" strokeWidth="5.500">
          <path d="M46 24H6M25 4L5 24L25 44" />
        </svg>
      </button>
      <div className="ml-[9px] flex size-24 items-center justify-center rounded-full bg-[#e6e0fd] text-[42px] font-medium text-[#5b47cf]">V</div>
      <h1 className="ml-[25px] flex-1 text-[46px] leading-[52px]">V.I.P</h1>
      <button aria-label="Arama ekle">
        <svg viewBox="0 0 24 24" className="size-[67px]" fill="none" stroke="currentColor" strokeWidth="2" strokeLinejoin="round" strokeLinecap="round">
          <path d="M20 20C11 19.700 4.300 13.200 4 4H7.900L8.600 7.900L6 10.500M13.600 17.700L16.300 15L20 15.800V20M17 3.900V10.100M13.900 7H20.100" />
        </svg>
      </button>
      <button aria-label="Diğer seçenekler" className="mr-9 ml-14">
        <svg viewBox="0 0 52 52" className="size-13" fill="currentColor">
          <circle cx="26" cy="9" r="5.500" />
          <circle cx="26" cy="26" r="5.500" />
          <circle cx="26" cy="43" r="5.500" />
        </svg>
      </button>
    </header>
  );
}

function Tail() {
  return (
    <svg viewBox="0 0 19 32" className="absolute top-0 left-full h-8 w-[19px]" fill="#d8fdd2" aria-hidden="true">
      <path d="M0 0H16Q20 0 18 5L3 25Q0 29 0 32Z" />
    </svg>
  );
}

function Ticks() {
  return (
    <svg viewBox="0 0 44 30" className="mb-1 ml-3 h-[30px] w-11" fill="none" stroke="#4b6953" strokeWidth="4" aria-label="İletildi">
      <path d="M2 17L11 27L29 2M19 24L22 27L42 2" />
    </svg>
  );
}

function TextBubble({ text, time }: { text: string; time: string }) {
  return (
    <div className="relative flex max-w-[876px] items-end self-end rounded-[30px] rounded-tr-none bg-[#d8fdd2] pt-4 pr-6 pb-3 pl-7 shadow-[0_2px_1px_#d5d3c8]">
      <Tail />
      <p className="mb-[10px] flex-1 text-[44px] leading-[52px] text-[#06120c]">{text}</p>
      <time className="ml-[22px] text-[33px] leading-9 text-[#5b7162]">{time}</time>
      <Ticks />
    </div>
  );
}

function CallBubble({ time }: { time: string }) {
  return (
    <div className="relative self-end rounded-[32px] rounded-tr-none bg-[#d8fdd2] px-[10px] pt-[10px] pb-3 shadow-[0_2px_1px_#d5d3c8]">
      <Tail />
      <div className="flex h-[166px] items-center rounded-[22px] bg-[#d4f2cd] pr-6 pl-[22px]">
        <div className="flex size-[110px] items-center justify-center rounded-full bg-[#eff9ed]">
          <svg viewBox="0 0 24 24" className="size-[54px]" fill="#5b6368">
            <path d="M3 3.600Q3 3 3.700 3H8.200Q8.900 3 9 3.700L9.800 7.300L6.900 10.400C8.400 13.200 10.600 15.400 13.700 17L16.400 14.400L20.200 15.100Q21 15.200 21 15.900V20.200Q21 21 20.200 21C11 20.500 3.500 13 3 3.600Z" />
            <path d="M13.700 10.300L19.900 4.100M15.500 4H20.100V8.600" fill="none" stroke="#5b6368" strokeWidth="1.800" />
          </svg>
        </div>
        <div className="ml-[22px] pb-[10px] text-[39px] leading-[54px]">
          <p className="font-bold text-[#06120c]">Sesli arama</p>
          <p className="text-[#4f6a56]">Cevaplanmadı</p>
        </div>
        <time className="mb-6 ml-[33px] self-end text-[33px] leading-9 text-[#5b7162]">{time}</time>
      </div>
    </div>
  );
}

function Row({ label, value, tone }: { label: React.ReactNode; value: string; tone: string }) {
  return (
    <div className="flex items-center justify-between">
      <span className="flex items-center gap-[6px] text-[#d6d6d6]">{label}</span>
      <span className={tone}>{value}</span>
    </div>
  );
}

function IdLabel({ id }: { id: string }) {
  return (
    <>
      <span className="text-[#8b8b8b]">KİMLİK:</span> {id}
      <MdContentCopy className="ml-1 size-[22px] text-white" />
    </>
  );
}

const tabs = ["PARA YATIR", "ÇEKİM", "İŞLEM GEÇMİŞİ", "PARA ÇEKME DURUMU"];

function SharedScreenshot() {
  return (
    <div className="rounded-t-[34px] bg-[#d8fdd2] p-[10px]">
      <div className="aspect-[680/952] w-[680px] overflow-hidden rounded-[26px] bg-black text-white">
        <div className="flex h-[54px] items-start justify-between pr-6 pl-[75px]">
          <svg viewBox="0 0 54 30" className="h-[30px] w-[54px]" aria-label="iDDACI">
            <path d="M13 4L23 1L33 4M12 21L15 24L23 27L31 24L34 21" stroke="#f39a2d" strokeWidth="2" fill="none" />
            <text x="0" y="19" fontSize="15" fontWeight="900" fill="#f39a2d">
              iDDA<tspan fill="#ffffff">CI</tspan>
            </text>
          </svg>
          <svg viewBox="0 0 24 24" className="size-6" fill="none" stroke="#a3a3a3" strokeWidth="2.500">
            <path d="M1-1L23 22M23-1L1 22" />
          </svg>
        </div>
        <div className="flex h-[67px] items-center bg-[#1b1b1b] pl-3">
          <svg viewBox="0 0 36 36" className="size-9" fill="none">
            <circle cx="18" cy="18" r="17.500" fill="#d2d2d2" />
            <path d="M21.500 10L13.500 18L21.500 26" stroke="#1b1b1b" strokeWidth="3" />
          </svg>
          <span className="ml-[13px] text-2xl text-[#ececec]">BAKİYE YÖNETİMİ</span>
        </div>
        <div className="flex h-[69px] items-stretch bg-[#121212] text-[18px] tracking-[0.08em] text-[#e6e6e6]">
          {tabs.map((t, i) => (
            <div
              key={t}
              className={
                i === 3
                  ? "flex items-center border-b-4 border-[#4a4a4a] px-[17px] whitespace-nowrap"
                  : i === 1
                    ? "flex flex-1 items-center justify-center border-b-4 border-[#1d1d1d] whitespace-nowrap"
                    : "flex items-center border-b-4 border-[#1d1d1d] px-[17px] whitespace-nowrap"
              }
            >
              {t}
            </div>
          ))}
        </div>
        <div className="mx-3 mt-[26px] rounded-lg bg-[#0d0d0d] px-[18px] pb-[7px] text-[21px] leading-7 font-bold">
          <div className="border-b-2 border-[#212121] py-[17px]">
            <Row label={<IdLabel id="512137877" />} value="27.07.2025, 12:36" tone="text-[#858585]" />
          </div>
          <div className="border-b-2 border-[#212121] py-[17px]">
            <Row label="Sistem" value="HillPaysHavale" tone="text-[#a67c1c]" />
          </div>
          <div className="flex flex-col gap-[18px] pt-4 pb-[26px]">
            <Row label="Tutar" value="12880 ₺" tone="text-[#f0b02c]" />
            <Row label="Durum" value="withdraw_status_New" tone="text-[#198a28]" />
          </div>
          <div className="flex h-[63px] items-center justify-center rounded-md border-2 border-[#777777] font-normal text-[#dedede]">CANCEL WİTHDRAW</div>
        </div>
        <div className="mx-3 mt-[18px] rounded-lg bg-[#0d0d0d] px-[18px] text-[21px] leading-7 font-bold">
          <div className="border-b-2 border-[#212121] py-[17px]">
            <Row label={<IdLabel id="511822807" />} value="26.07.2025, 22:00" tone="text-[#858585]" />
          </div>
          <div className="py-[17px]">
            <Row label="Sistem" value="HillPaysHavale" tone="text-[#a67c1c]" />
          </div>
        </div>
      </div>
    </div>
  );
}

function Composer() {
  return (
    <div className="relative flex items-center gap-[14px] pt-[11px] pr-3 pb-[13px] pl-[14px]">
      <form className="flex h-[127px] min-w-0 flex-1 items-center rounded-full bg-white pr-9 pl-[29px] text-[#5b6368] shadow-[0_2px_2px_#d5d3c8]">
        <button type="button" aria-label="Çıkartmalar">
          <svg viewBox="0 0 58 58" className="size-[58px]" fill="none" stroke="currentColor" strokeWidth="5" strokeLinejoin="round">
            <path d="M21 3.500H37Q54.500 3.500 54.500 21V33C51 44 43 51 32 54.500H21Q3.500 54.500 3.500 37V21Q3.500 3.500 21 3.500Z" />
            <path d="M54.500 32.500H47Q33.500 33 32.500 45V54.500" strokeWidth="4" />
            <circle cx="20.500" cy="21" r="4.300" fill="currentColor" stroke="none" />
            <circle cx="39" cy="21" r="4.300" fill="currentColor" stroke="none" />
            <path d="M17 33.500H43Q34 36 31 44.500Q20 44 17 33.500Z" fill="currentColor" stroke="none" />
          </svg>
        </button>
        <span className="ml-[31px] h-[67px] w-[5px] shrink-0 bg-[#1daa61]" />
        <input aria-label="Mesaj" placeholder="Mesaj" className="-ml-1 min-w-0 flex-1 bg-transparent pt-1 text-[50px] outline-none placeholder:text-[#5b6368]" />
        <button type="button" aria-label="Dosya ekle">
          <svg viewBox="0 0 36 58" className="h-[58px] w-9" fill="none" stroke="currentColor" strokeWidth="4.500" strokeLinecap="round">
            <path d="M33 14V39Q33 54.500 18 54.500T3 39V14Q3 3 13.500 3T24 14V36Q24 42 18 42T12.500 36V15" />
          </svg>
        </button>
        <button type="button" aria-label="Kamera" className="ml-20">
          <svg viewBox="0 0 58 54" className="h-[54px] w-[58px]" fill="none" stroke="currentColor" strokeWidth="5" strokeLinejoin="round">
            <path d="M3.500 10.500H16L21.500 3.500H36.500L42 10.500H54.500V50.500H3.500Z" />
            <circle cx="29" cy="30" r="10.500" />
          </svg>
        </button>
      </form>
      <button aria-label="Sesli mesaj" className="flex size-[129px] shrink-0 items-center justify-center rounded-full bg-[#1daa61] text-white shadow-[0_3px_4px_#b9bbb0]">
        <MdMic className="size-[68px]" />
      </button>
    </div>
  );
}

function NavBar() {
  return (
    <nav className="flex h-[130px] items-center justify-center gap-[182px] bg-[#f6f7fa] text-[#6d6d6d]">
      <button aria-label="Son uygulamalar">
        <svg viewBox="0 0 54 54" className="size-[54px]" fill="currentColor">
          <rect x="7" y="7" width="40" height="40" rx="6" />
        </svg>
      </button>
      <button aria-label="Ana ekran">
        <svg viewBox="0 0 54 54" className="size-[54px]" fill="currentColor">
          <circle cx="27" cy="27" r="25" fill="none" stroke="currentColor" strokeWidth="4" />
          <circle cx="27" cy="27" r="15" />
        </svg>
      </button>
      <button aria-label="Geri git">
        <svg viewBox="0 0 54 54" className="size-[54px]" fill="currentColor">
          <path d="M43 4.500Q45 3.500 45 6V48Q45 50.500 43 49.500L10 29Q7 27 10 25Z" />
        </svg>
      </button>
    </nav>
  );
}

export default function App() {
  return (
    <div className="flex h-screen flex-col bg-white font-[Roboto,sans-serif]">
      <StatusBar />
      <Header />
      <div className="relative flex min-h-0 flex-1 flex-col border-t border-[#e8e6e1] bg-[#f5f2eb]">
        <Wallpaper />
        <main className="relative flex min-h-0 flex-1 flex-col gap-7 overflow-hidden pt-[18px] pr-[47px] pl-4 *:shrink-0">
          <CallBubble time="22:43" />
          <TextBubble text="Dostum nereye kayboldunuzki" time="22:56" />
          <div className="my-px -mr-[31px] self-center rounded-[20px] bg-[#fdfdfc] px-6 py-4 text-[35px] leading-11 font-medium text-[#5b6368] shadow-[0_1px_1px_#dedad2]">Dün</div>
          <CallBubble time="12:50" />
          <TextBubble text="Merhaba caner" time="15:51" />
          <CallBubble time="15:51" />
          <TextBubble text="Bakabilirmisin dostum dün senin davetinle oynadik ettik her zaman yanindayim dedin simdi yoksun" time="15:52" />
          <div className="-mt-[22px] flex items-center gap-6 self-end">
            <button aria-label="İlet" className="flex size-[88px] items-center justify-center rounded-full bg-[#7a7a7a]/40">
              <svg viewBox="0 0 56 40" className="h-10 w-14" fill="none" stroke="#ffffff" strokeWidth="5.500" strokeLinecap="round" strokeLinejoin="round">
                <path d="M4 35V31Q4 17 18 17H38M25 4L38 17L25 30M39 4L52 17L39 30" />
              </svg>
            </button>
            <SharedScreenshot />
          </div>
        </main>
        <button aria-label="En alta git" className="absolute right-[33px] bottom-[195px] flex size-[90px] items-center justify-center rounded-full bg-white/85 shadow-[0_2px_2px_#00000022]">
          <svg viewBox="0 0 36 40" className="h-10 w-9" fill="none" stroke="#5b6368" strokeWidth="5">
            <path d="M3 4L18 18L33 4M3 21L18 35L33 21" />
          </svg>
        </button>
        <Composer />
      </div>
      <NavBar />
    </div>
  );
}
